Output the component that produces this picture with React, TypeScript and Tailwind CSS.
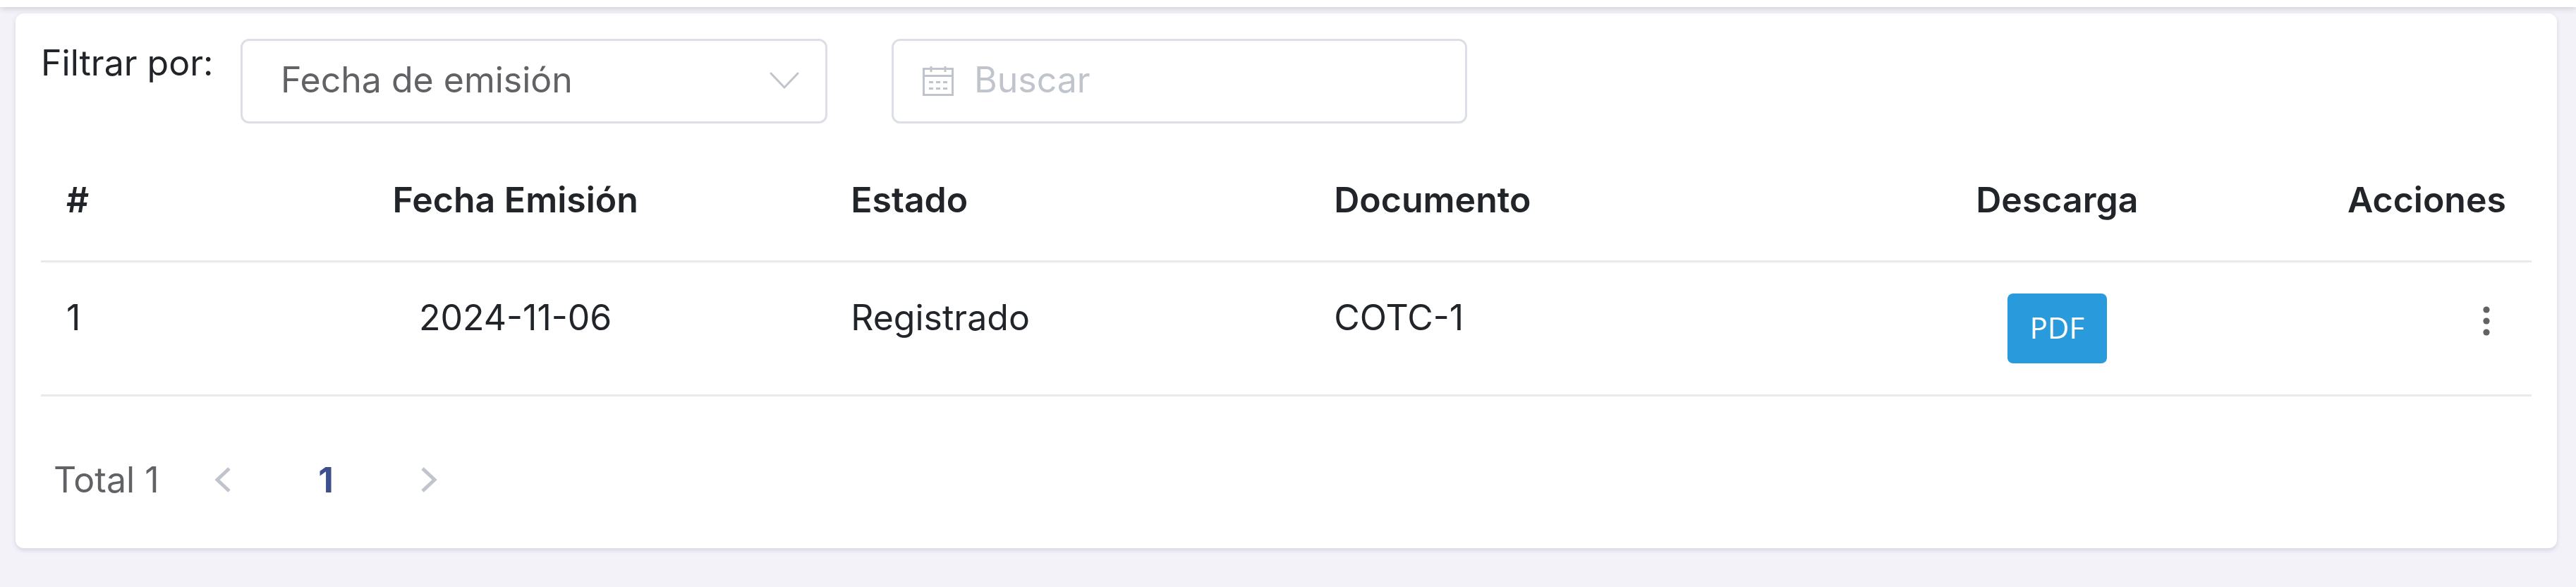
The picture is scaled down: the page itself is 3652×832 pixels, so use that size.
import { useState } from "react";

const rows = [{ id: 1, fecha: "2024-11-06", estado: "Registrado", documento: "COTC-1" }];

function ChevronDown() {
  return (
    <svg viewBox="0 0 42 24" className="pointer-events-none absolute top-[47px] right-10 h-6 w-[42px]" fill="none" stroke="#c0c4cc" strokeWidth="3" strokeLinecap="round" strokeLinejoin="round" aria-hidden="true">
      <path d="M2 2 L21 22 L40 2" />
    </svg>
  );
}

function CalendarIcon() {
  return (
    <svg viewBox="0 0 46 44" className="h-11 w-[46px] shrink-0" fill="none" stroke="#c0c4cc" strokeWidth="3" aria-hidden="true">
      <path d="M2.5 4.5 H43.5 V41.5 H2.5 Z M2.5 14.5 H43.5" />
      <path d="M13 1 V9 M33 1 V9" />
      <path d="M10 23.5 H16 M20 23.5 H26 M30 23.5 H36 M10 32.5 H16 M20 32.5 H26 M30 32.5 H36" />
    </svg>
  );
}

function Arrow({ path }: { path: string }) {
  return (
    <svg viewBox="0 0 24 36" className="h-9 w-6" fill="none" stroke="#c0c4cc" strokeWidth="5" aria-hidden="true">
      <path d={path} />
    </svg>
  );
}

function MoreIcon() {
  return (
    <svg viewBox="0 0 12 44" className="h-11 w-3" fill="#606266" aria-hidden="true">
      <circle cx="6" cy="6" r="4.6" />
      <circle cx="6" cy="22" r="4.6" />
      <circle cx="6" cy="38" r="4.6" />
    </svg>
  );
}

export default function App() {
  const [campo, setCampo] = useState("fecha");
  const [texto, setTexto] = useState("");

  return (
    <div className="min-h-screen bg-[#f3f2f9] font-['Inter',sans-serif] text-[50px] leading-[68px] text-[#212529]">
      <header className="h-[10px] bg-white shadow-[0_2px_10px_rgba(0,0,0,0.16)]" />
      <main className="pt-[9px] pr-[27px] pl-[22px]">
        <section className="relative rounded-xl bg-white px-9 pt-9 pb-[63px] shadow-[0_3px_6px_rgba(40,40,70,0.14)]">
          <div className="flex items-start">
            <label htmlFor="campo" className="w-[283px] shrink-0 whitespace-nowrap">
              Filtrar por:
            </label>
            <div className="relative mr-[91px] w-[832px]">
              <select
                id="campo"
                value={campo}
                onChange={(e) => setCampo(e.target.value)}
                className="h-[120px] w-full appearance-none rounded-xl border-[3px] border-[#dcdfe6] bg-white px-[54px] pb-1 text-[#606266] outline-none"
              >
                <option value="fecha">Fecha de emisión</option>
                <option value="estado">Estado</option>
              </select>
              <ChevronDown />
            </div>
            <div className="flex h-[120px] w-[816px] items-center gap-7 rounded-xl border-[3px] border-[#dcdfe6] px-10">
              <CalendarIcon />
              <input
                type="text"
                aria-label="Buscar"
                placeholder="Buscar"
                value={texto}
                onChange={(e) => setTexto(e.target.value)}
                className="w-full min-w-0 pb-1 text-[#606266] outline-none placeholder:text-[#c0c4cc]"
              />
            </div>
          </div>

          <table className="mt-7 w-full table-fixed border-collapse text-left">
            <colgroup>
              <col className="w-[6.6%]" />
              <col className="w-[24.9%]" />
              <col className="w-[19.4%]" />
              <col className="w-[20.8%]" />
              <col className="w-[18.5%]" />
              <col className="w-[9.8%]" />
            </colgroup>
            <thead>
              <tr className="border-b-[3px] border-[#e8eaed] [&>th]:px-9 [&>th]:pt-[46px] [&>th]:pb-[52px] [&>th]:font-semibold">
                <th scope="col">#</th>
                <th scope="col" className="text-center">Fecha Emisión</th>
                <th scope="col">Estado</th>
                <th scope="col">Documento</th>
                <th scope="col" className="text-center">Descarga</th>
                <th scope="col"><div className="flex justify-end">Acciones</div></th>
              </tr>
            </thead>
            <tbody>
              {rows.map((row) => (
                <tr key={row.id} className="border-b-[3px] border-[#e8eaed] align-top [&>td]:px-9 [&>td]:py-11">
                  <td>{row.id}</td>
                  <td className="text-center">{row.fecha}</td>
                  <td>{row.estado}</td>
                  <td>{row.documento}</td>
                  <td>
                    <button type="button" className="mx-auto flex h-[99px] w-[141px] items-center justify-center rounded-lg bg-[#299bdc] pb-1 font-['Open_Sans',sans-serif] text-[42px] text-white">
                      PDF
                    </button>
                  </td>
                  <td>
                    <button type="button" aria-label="Acciones" className="ml-auto flex h-[78px] w-14 items-center justify-center">
                      <MoreIcon />
                    </button>
                  </td>
                </tr>
              ))}
            </tbody>
          </table>

          <nav aria-label="Paginación" className="mt-[84px] flex items-center pl-[18px] text-[#606266]">
            <span className="w-[206px]">Total 1</span>
            <button type="button" aria-label="Anterior" disabled className="flex w-[68px] justify-center">
              <Arrow path="M21 2 L4 18 L21 34" />
            </button>
            <button type="button" aria-current="page" className="w-[224px] text-center font-bold text-[#3f4f8d]">
              1
            </button>
            <button type="button" aria-label="Siguiente" disabled className="flex w-[68px] justify-center">
              <Arrow path="M3 2 L20 18 L3 34" />
            </button>
          </nav>
        </section>
      </main>
    </div>
  );
}
